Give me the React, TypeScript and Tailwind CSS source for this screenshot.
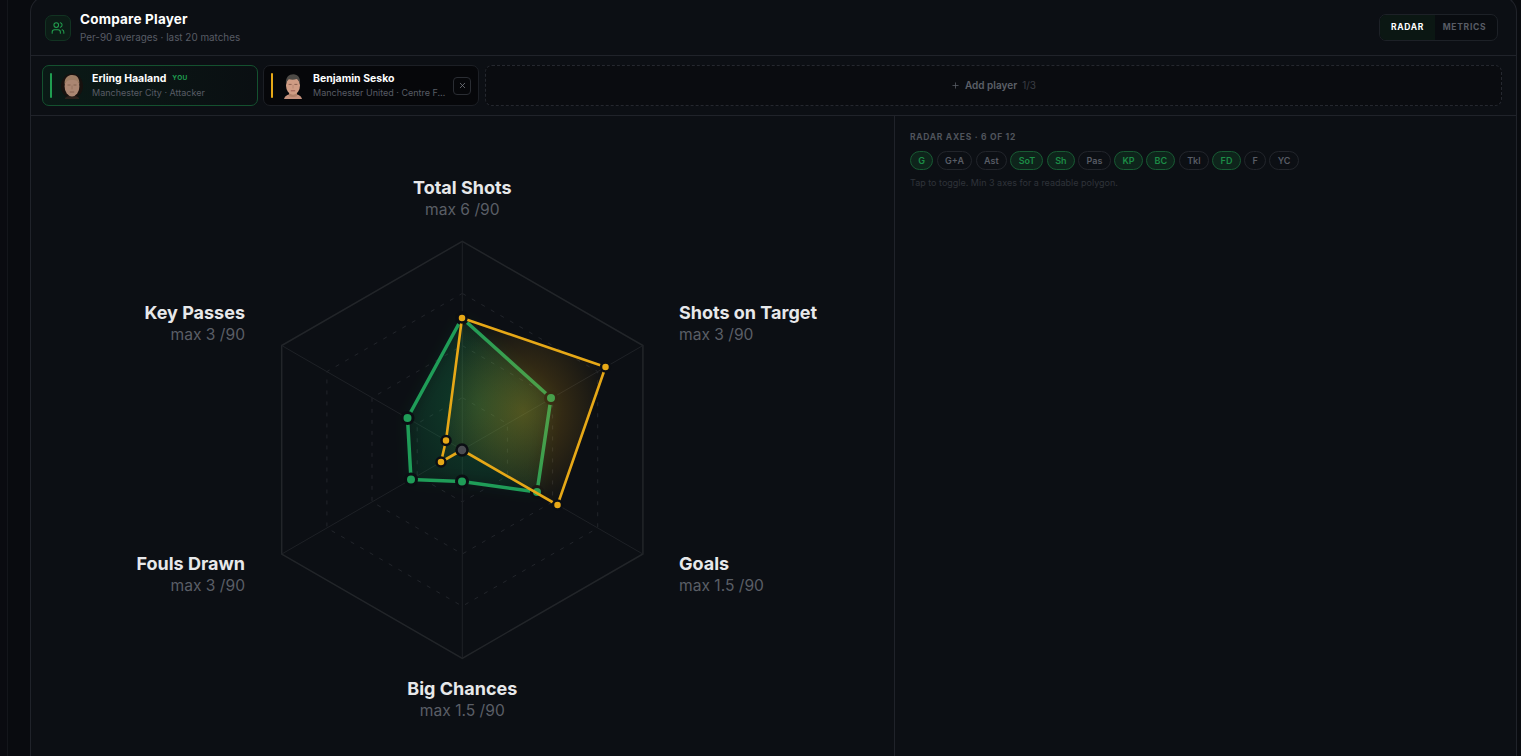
import { Plus, Users, X } from "lucide-react";

const CX = 462.3;
const CY = 449.8;
const R = 208.5;

// top, then clockwise
const angles = [0, 60, 120, 180, 240, 300].map((d) => (d * Math.PI) / 180);
const ring = (r: number) =>
  angles
    .map((a) => `${(CX + r * Math.sin(a)).toFixed(1)},${(CY - r * Math.cos(a)).toFixed(1)}`)
    .join(" ");

const greenPts: [number, number][] = [
  [462, 318],
  [551, 398],
  [537, 492],
  [462, 481.5],
  [411, 479.5],
  [407.5, 418],
];
const amberPts: [number, number][] = [
  [462, 318],
  [605.5, 367],
  [557.5, 505],
  [462, 450],
  [441, 462],
  [446, 440.5],
];
const toPoints = (pts: [number, number][]) => pts.map((p) => p.join(",")).join(" ");

const axes = [
  { label: "G", on: true },
  { label: "G+A", on: false },
  { label: "Ast", on: false },
  { label: "SoT", on: true },
  { label: "Sh", on: true },
  { label: "Pas", on: false },
  { label: "KP", on: true },
  { label: "BC", on: true },
  { label: "Tkl", on: false },
  { label: "FD", on: true },
  { label: "F", on: false },
  { label: "YC", on: false },
];

const chartLabels = [
  { name: "Total Shots", sub: "max 6 /90", x: 462.3, y: 194, anchor: "middle" },
  { name: "Shots on Target", sub: "max 3 /90", x: 679, y: 319, anchor: "start" },
  { name: "Goals", sub: "max 1.5 /90", x: 679, y: 570, anchor: "start" },
  { name: "Big Chances", sub: "max 1.5 /90", x: 462.3, y: 695, anchor: "middle" },
  { name: "Fouls Drawn", sub: "max 3 /90", x: 245, y: 570, anchor: "end" },
  { name: "Key Passes", sub: "max 3 /90", x: 245, y: 319, anchor: "end" },
];

function HaalandFace() {
  return (
    <svg viewBox="0 0 24 26" className="h-[26px] w-6 shrink-0 blur-[0.5px]">
      <ellipse cx="12" cy="13" rx="11" ry="12.5" fill="#17110e" />
      <path d="M5 25c2-3 12-3 14 0v1H5z" fill="#2c211c" />
      <ellipse cx="12" cy="13.5" rx="7.4" ry="10" fill="#ab8672" />
      <path d="M4.6 11.5C4.2 4.5 8 2 12.4 2s7.4 3 7 9.5c-1-3-2.5-4.4-7-4.4S5.8 8.5 4.6 11.5z" fill="#9d7d64" />
      <path d="M7.5 12h3M13.5 12h3" stroke="#7a5a48" strokeWidth="0.8" />
      <path d="M12 12.5v3.8" stroke="#93705c" strokeWidth="0.8" />
      <path d="M9.8 19h4.4" stroke="#7c5547" strokeWidth="0.8" />
    </svg>
  );
}

function SeskoFace() {
  return (
    <svg viewBox="0 0 24 26" className="h-[26px] w-6 shrink-0 blur-[0.5px]">
      <path d="M3 26c1-4 5-5 9-5s8 1 9 5z" fill="#c4917c" />
      <path d="M8 19h8v4c-2 1.4-6 1.4-8 0z" fill="#b08069" />
      <ellipse cx="12" cy="12.5" rx="7" ry="9.2" fill="#cf9c84" />
      <path d="M5 11.5C4.2 4 8 1.2 12.4 1.2S19.8 4.5 19 11.5c-.8-2.8-1.800-4.800-3.400-5.400-2 .8-5.600.8-7.600.2-1.600.8-2.400 2.800-3 5.200z" fill="#4d4a46" />
      <path d="M7.6 11.4h3M13.4 11.4h3" stroke="#7a5244" strokeWidth="0.8" />
      <path d="M12 11.8v3.6" stroke="#b08470" strokeWidth="0.8" />
      <path d="M9.8 17.8h4.4" stroke="#96574e" strokeWidth="0.9" />
    </svg>
  );
}

function RadarChart() {
  return (
    <svg viewBox="31 116 863 640" className="block h-[640px] w-[863px]">
      <defs>
        <radialGradient id="greenFill">
          <stop offset="0%" stopColor="#22a95c" stopOpacity="0.24" />
          <stop offset="100%" stopColor="#22a95c" stopOpacity="0.06" />
        </radialGradient>
        <radialGradient id="amberFill">
          <stop offset="0%" stopColor="#eaa815" stopOpacity="0.3" />
          <stop offset="100%" stopColor="#eaa815" stopOpacity="0.03" />
        </radialGradient>
        <filter id="glow" x="-30%" y="-30%" width="160%" height="160%">
          <feGaussianBlur stdDeviation="8" />
        </filter>
      </defs>

      {[0.25, 0.5, 0.75].map((f) => (
        <polygon key={f} points={ring(R * f)} fill="none" stroke="#22252b" strokeWidth="1" strokeDasharray="4 7" />
      ))}
      <polygon points={ring(R)} fill="none" stroke="#222529" strokeWidth="1.5" />
      {angles.map((a) => (
        <line
          key={a}
          x1={CX}
          y1={CY}
          x2={CX + R * Math.sin(a)}
          y2={CY - R * Math.cos(a)}
          stroke="#1e2126"
          strokeWidth="1"
        />
      ))}

      <polygon points={toPoints(greenPts)} fill="#22a95c" fillOpacity="0.1" filter="url(#glow)" />
      <polygon points={toPoints(greenPts)} fill="url(#greenFill)" stroke="#1f9d58" strokeWidth="3.5" strokeLinejoin="round" />
      {greenPts.map(([x, y]) => (
        <circle key={`${x}-${y}`} cx={x} cy={y} r="5.5" fill="#1f9d58" stroke="#0b0e13" strokeWidth="3" />
      ))}

      <polygon points={toPoints(amberPts)} fill="url(#amberFill)" stroke="#e6a817" strokeWidth="2.6" strokeLinejoin="round" />
      {amberPts.map(([x, y], i) => (
        <circle
          key={`${x}-${y}`}
          cx={x}
          cy={y}
          r={i === 3 ? 5.5 : 4.5}
          fill={i === 3 ? "#4a4c52" : "#e6a817"}
          stroke="#0b0e13"
          strokeWidth="2.5"
        />
      ))}

      {chartLabels.map((l) => (
        <g key={l.name} textAnchor={l.anchor as "start" | "middle" | "end"}>
          <text x={l.x} y={l.y} fill="#e7e8ea" className="text-[18px] font-bold">
            {l.name}
          </text>
          <text x={l.x} y={l.y + 21} fill="#5a5e66" className="text-[15.6px]">
            {l.sub}
          </text>
        </g>
      ))}
    </svg>
  );
}

export default function App() {
  return (
    <div className="flex h-screen overflow-hidden bg-[#090b0f] font-['Inter',sans-serif]">
      <div className="w-2 shrink-0 border-r border-[#14161b] bg-[#0a0b10]" />
      <main className="mt-[-4px] ml-[22px] mr-1 flex min-w-0 flex-1 flex-col rounded-t-[16px] border border-b-0 border-[#20232a] bg-[#0c0f14]">
        <header className="flex h-[59px] shrink-0 items-center justify-between border-b border-[#20232a] pt-[3px] pr-[18px] pl-[14px]">
          <div className="flex items-center gap-[9px]">
            <div className="flex h-[26px] w-[26px] items-center justify-center rounded-[7px] border border-[#123322] bg-[#0c1c16]">
              <Users size={14} strokeWidth={1.75} className="text-[#22a04f]" />
            </div>
            <div className="mb-[3px]">
              <h1 className="text-[13.5px] leading-[18px] font-bold tracking-[0.2px] text-white">Compare Player</h1>
              <p className="mt-[3px] text-[9.9px] leading-[12px] text-[#585c65]">Per-90 averages · last 20 matches</p>
            </div>
          </div>
          <div className="flex h-[27px] w-[119px] items-center overflow-hidden rounded-[7px] border border-[#1d2127] bg-[#090c10] text-[8.5px] font-bold tracking-[0.7px]">
            <span className="flex h-full w-[55px] items-center justify-center bg-[#0b1713] text-white">RADAR</span>
            <span className="flex h-full flex-1 items-center justify-center pr-[3px] text-[#585c65]">METRICS</span>
          </div>
        </header>

        <section className="flex h-[60px] shrink-0 items-center gap-[5px] border-b border-[#20232a] pr-[14px] pl-[11px]">
          <div className="flex h-[41px] w-[216px] shrink-0 items-center rounded-[7px] border border-[#14512f] bg-gradient-to-r from-[#0a1a16] to-[#0a0f12] pl-[7px]">
            <span className="h-[25px] w-[2px] rounded-full bg-[#1f9d50]" />
            <span className="ml-[8px]">
              <HaalandFace />
            </span>
            <div className="ml-[8px] min-w-0">
              <div className="flex items-center gap-[6px]">
                <span className="text-[10.5px] leading-[14px] font-bold text-white">Erling Haaland</span>
                <span className="text-[6.5px] font-bold tracking-[0.4px] text-[#1f9d50]">YOU</span>
              </div>
              <p className="text-[9px] leading-[13px] text-[#585c65]">Manchester City · Attacker</p>
            </div>
          </div>

          <div className="flex h-[41px] w-[216px] shrink-0 items-center rounded-[7px] border border-[#1c1f25] bg-[#06070a] pl-[7px]">
            <span className="h-[25px] w-[2px] rounded-full bg-[#e6a817]" />
            <span className="ml-[8px]">
              <SeskoFace />
            </span>
            <div className="ml-[8px] w-[134px] min-w-0">
              <p className="text-[10.5px] leading-[14px] font-bold text-white">Benjamin Sesko</p>
              <p className="truncate text-[9px] leading-[13px] text-[#585c65]">Manchester United · Centre Forward</p>
            </div>
            <div className="ml-[6px] flex h-[18px] w-[18px] shrink-0 items-center justify-center rounded-[4px] border border-[#2a2d33]">
              <X size={9} className="text-[#7c8087]" />
            </div>
          </div>

          <div className="ml-px flex h-[41px] flex-1 items-center justify-center gap-[5px] rounded-[7px] border border-dashed border-[#25282f] bg-[#0a0c10] text-[10px]">
            <Plus size={9} className="text-[#5c6068]" />
            <span className="font-semibold text-[#5c6068]">Add player</span>
            <span className="text-[#3a3d44]">1/3</span>
          </div>
        </section>

        <div className="flex min-h-0 flex-1">
          <div className="w-[864px] shrink-0 border-r border-[#20232a]">
            <RadarChart />
          </div>
          <aside className="flex-1 pt-[15px] pl-[15px]">
            <h2 className="text-[8.5px] leading-[12px] font-bold tracking-[0.7px] text-[#50545c]">RADAR AXES · 6 OF 12</h2>
            <div className="mt-[8px] flex gap-[3.5px]">
              {axes.map((a) => (
                <span
                  key={a.label}
                  className={
                    a.on
                      ? "flex h-[19px] items-center rounded-full border border-[#185a33] bg-[#0e241b] px-[7.25px] text-[9px] font-semibold text-[#1c8c46]"
                      : "flex h-[19px] items-center rounded-full border border-[#22252b] px-[7.25px] text-[9px] font-semibold text-[#585c65]"
                  }
                >
                  {a.label}
                </span>
              ))}
            </div>
            <p className="mt-[7px] text-[9px] leading-[12px] text-[#2f333a]">Tap to toggle. Min 3 axes for a readable polygon.</p>
          </aside>
        </div>
      </main>
    </div>
  );
}
